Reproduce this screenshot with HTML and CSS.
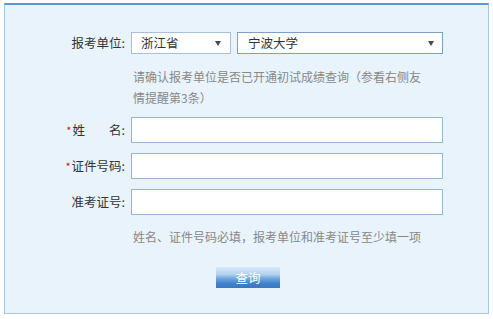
FILE: index.html
```html
<!DOCTYPE html>
<html lang="zh-CN">
<head>
<meta charset="utf-8">
<title>成绩查询</title>
<link rel="stylesheet" href="styles.css">
</head>
<body>
<div class="panel">
  <div class="form">
    <div class="label label-short">报考单位:</div>
    <div class="field selects">
      <div class="select select-prov"><span>浙江省</span><i class="arrow"></i></div>
      <div class="select select-unit"><span>宁波大学</span><i class="arrow"></i></div>
    </div>

    <div class="field hint hint-top">请确认报考单位是否已开通初试成绩查询（参看右侧友情提醒第3条）</div>

    <div class="label"><em class="req">*</em>姓<span class="sp"></span>名:</div>
    <div class="field"><div class="input"></div></div>

    <div class="label spaced"><em class="req">*</em>证件号码:</div>
    <div class="field spaced"><div class="input"></div></div>

    <div class="label spaced">准考证号:</div>
    <div class="field spaced"><div class="input"></div></div>

    <div class="field hint hint-bottom">姓名、证件号码必填，报考单位和准考证号至少填一项</div>

    <div class="field btn-row"><button class="btn">查询</button></div>
  </div>
</div>
</body>
</html>
```

FILE: styles.css
```css
* { box-sizing: border-box; }

html, body {
  margin: 0;
  padding: 0;
  background: #ffffff;
}

body {
  padding: 3px 0 0 4px;
  font-family: "Noto Sans CJK SC", "Noto Sans", sans-serif;
  font-size: 12px;
  color: #333333;
}

.panel {
  width: 485px;
  height: 311px;
  background: #e8f3fc;
  border: 1px solid #a9c5e2;
  border-top: 2px solid #5b98d2;
  padding-top: 27px;
}

.form {
  display: grid;
  grid-template-columns: 120px 312px;
  column-gap: 6px;
  align-items: center;
}

.label {
  grid-column: 1;
  text-align: right;
  line-height: 26px;
  white-space: nowrap;
  color: #333333;
  font-size: 12.5px;
}

.label-short {
  line-height: 22px;
}

.field {
  grid-column: 2;
}

.spaced {
  margin-top: 10px;
}

.selects {
  display: flex;
  gap: 6px;
  height: 22px;
}

.select {
  position: relative;
  height: 22px;
  background: #ffffff;
  border: 1px solid #a8c0dc;
  line-height: 20px;
  padding-left: 9px;
  color: #333333;
  font-size: 12.5px;
}

.select-prov { width: 100px; }
.select-unit { width: 206px; border-color: #7e9fc6; padding-left: 10px; }

.arrow {
  position: absolute;
  right: 8px;
  top: 8px;
  width: 0;
  height: 0;
  border-left: 3.5px solid transparent;
  border-right: 3.5px solid transparent;
  border-top: 5px solid #4a4a4a;
}

.select-prov .arrow { right: 9px; }

.hint {
  color: #888888;
  line-height: 21px;
  font-size: 12px;
  padding-left: 2px;
}

.hint-top {
  margin-top: 12px;
  margin-bottom: 9px;
  width: 295px;
}

.input {
  height: 26px;
  width: 312px;
  background: #ffffff;
  border: 1px solid #96b6d6;
}

.hint-bottom {
  margin-top: 11px;
}

.req {
  font-style: normal;
  color: #d11a1a;
  font-size: 11px;
  margin-right: 1px;
}

.sp {
  display: inline-block;
  width: 24px;
}

.btn-row {
  margin-top: 20px;
  padding-left: 85px;
}

.btn {
  display: block;
  width: 64px;
  height: 21px;
  padding: 0;
  border: none;
  background: linear-gradient(to bottom, #d8e9f8 0%, #b3d2ef 35%, #6fa6dd 55%, #3f7fc9 80%, #3a78c2 100%);
  color: #ffffff;
  font-family: "Noto Sans CJK SC", "Noto Sans", sans-serif;
  font-size: 12.5px;
  line-height: 21px;
  text-align: center;
}
```
